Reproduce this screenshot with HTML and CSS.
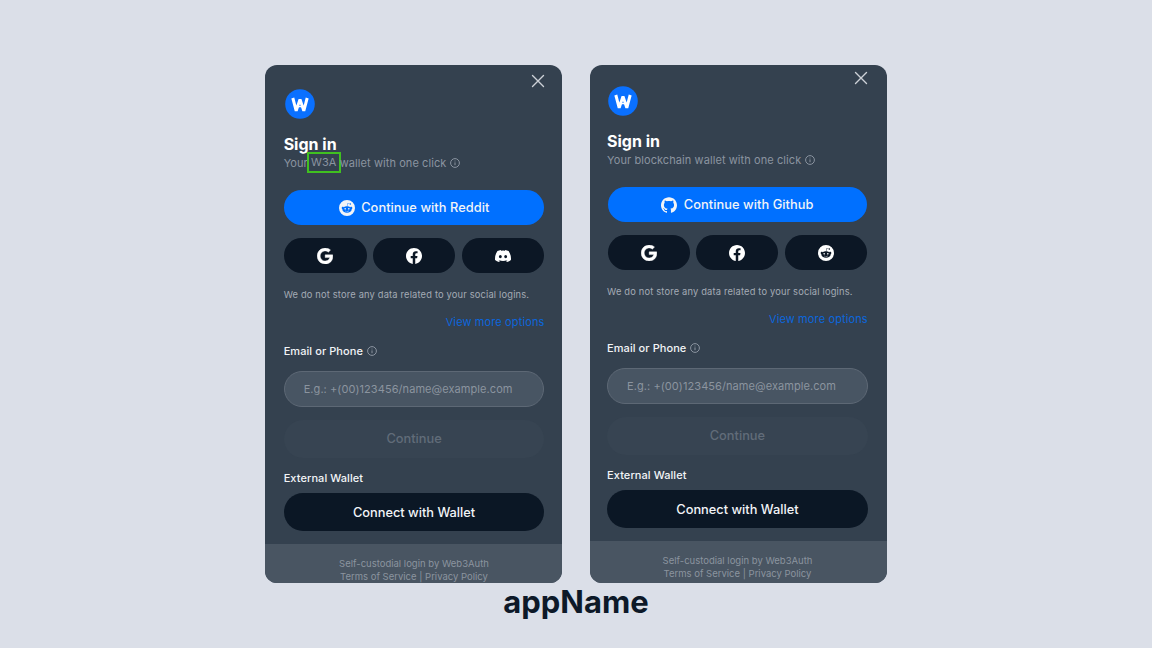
FILE: index.html
```html
<!DOCTYPE html>
<html lang="en">
<head>
<meta charset="utf-8">
<title>Sign in</title>
<link rel="stylesheet" href="styles.css">
</head>
<body>
<svg class="sprite" aria-hidden="true">
  <symbol id="close" viewBox="0 0 14 14"><path d="M1.5 1.5 12.5 12.5M12.5 1.5 1.5 12.5" fill="none" stroke="currentColor" stroke-width="1.4" stroke-linecap="round"/></symbol>
  <symbol id="info" viewBox="0 0 12 12"><circle cx="6" cy="6" r="4.4" fill="none" stroke="currentColor" stroke-width="1"/><path d="M6 5.4V8.2M6 3.6V4.4" stroke="currentColor" stroke-width="1" fill="none"/></symbol>
  <symbol id="logo" viewBox="0 0 30 30"><circle cx="15" cy="15" r="14.8" fill="#0a70ff"/><path d="M7.8 9 11.2 21.8 15 10.4 18.8 21.8 22.2 9" fill="none" stroke="#fff" stroke-width="3" stroke-linejoin="bevel"/><path d="M13.4 17.6h3.2" stroke="#fff" stroke-width="1.2"/></symbol>
  <symbol id="google" viewBox="0 0 24 24"><path d="M12.24 10.285V14.4h6.806c-.275 1.765-2.056 5.174-6.806 5.174-4.095 0-7.439-3.389-7.439-7.574s3.345-7.574 7.439-7.574c2.33 0 3.891.989 4.785 1.849l3.254-3.138C18.189 1.186 15.479 0 12.24 0c-6.635 0-12 5.365-12 12s5.365 12 12 12c6.926 0 11.52-4.869 11.52-11.726 0-.788-.085-1.39-.189-1.989H12.24z" fill="currentColor" stroke="currentColor" stroke-width=".6"/></symbol>
  <symbol id="facebook" viewBox="0 0 24 24"><path d="M24 12.073c0-6.627-5.373-12-12-12s-12 5.373-12 12c0 5.99 4.388 10.954 10.125 11.854v-8.385H7.078v-3.47h3.047V9.43c0-3.007 1.792-4.669 4.533-4.669 1.312 0 2.686.235 2.686.235v2.953H15.83c-1.491 0-1.956.925-1.956 1.874v2.25h3.328l-.532 3.47h-2.796v8.385C19.612 23.027 24 18.062 24 12.073z" fill="currentColor"/></symbol>
  <symbol id="discord" viewBox="0 0 24 24"><path d="M20.317 4.37a19.79 19.79 0 0 0-4.885-1.515c-.21.375-.444.864-.608 1.25a18.27 18.27 0 0 0-5.487 0 12.64 12.64 0 0 0-.617-1.25A19.74 19.74 0 0 0 3.677 4.37C.533 9.046-.319 13.58.099 18.057a19.9 19.9 0 0 0 5.993 3.03c.462-.63.874-1.295 1.226-1.994a13.1 13.1 0 0 1-1.872-.892l.372-.292a14.2 14.2 0 0 0 12.364 0l.373.292c-.598.35-1.22.645-1.873.892.36.698.772 1.362 1.225 1.993a19.84 19.84 0 0 0 6.002-3.03c.5-5.177-.838-9.674-3.549-13.66zM8.02 15.33c-1.183 0-2.157-1.085-2.157-2.419s.956-2.419 2.157-2.419c1.21 0 2.176 1.096 2.157 2.42 0 1.333-.956 2.418-2.157 2.418zm7.975 0c-1.183 0-2.157-1.085-2.157-2.419s.955-2.419 2.157-2.419c1.21 0 2.176 1.096 2.157 2.42 0 1.333-.946 2.418-2.157 2.418z" fill="currentColor"/></symbol>
  <symbol id="github" viewBox="0 0 24 24"><path d="M12 .297c-6.63 0-12 5.373-12 12 0 5.303 3.438 9.8 8.205 11.385.6.113.82-.258.82-.577 0-.285-.01-1.04-.015-2.04-3.338.724-4.042-1.61-4.042-1.61C4.422 18.07 3.633 17.7 3.633 17.7c-1.087-.744.084-.729.084-.729 1.205.084 1.838 1.236 1.838 1.236 1.07 1.835 2.809 1.305 3.495.998.108-.776.417-1.305.76-1.605-2.665-.3-5.466-1.332-5.466-5.93 0-1.31.465-2.38 1.235-3.22-.135-.303-.54-1.523.105-3.176 0 0 1.005-.322 3.3 1.23.96-.267 1.98-.399 3-.405 1.02.006 2.04.138 3 .405 2.28-1.552 3.285-1.23 3.285-1.23.645 1.653.24 2.873.12 3.176.765.84 1.23 1.91 1.23 3.22 0 4.61-2.805 5.625-5.475 5.92.42.36.81 1.096.81 2.22 0 1.606-.015 2.896-.015 3.286 0 .315.21.69.825.57C20.565 22.092 24 17.592 24 12.297c0-6.627-5.373-12-12-12" fill="currentColor"/></symbol>
  <symbol id="reddit" viewBox="0 0 24 24"><path fill-rule="evenodd" d="M12 0A12 12 0 0 0 0 12a12 12 0 0 0 12 12 12 12 0 0 0 12-12A12 12 0 0 0 12 0zm5.01 4.744c.688 0 1.25.561 1.25 1.249a1.25 1.25 0 0 1-2.498.056l-2.597-.547-.8 3.747c1.824.07 3.48.632 4.674 1.488.308-.309.73-.491 1.207-.491.968 0 1.754.786 1.754 1.754 0 .716-.435 1.333-1.01 1.614a3.111 3.111 0 0 1 .042.52c0 2.694-3.13 4.87-7.004 4.87-3.874 0-7.004-2.176-7.004-4.87 0-.183.015-.366.043-.534A1.748 1.748 0 0 1 4.028 12c0-.968.786-1.754 1.754-1.754.463 0 .898.196 1.207.49 1.207-.883 2.878-1.43 4.744-1.487l.885-4.182a.342.342 0 0 1 .14-.197.35.35 0 0 1 .238-.042l2.906.617a1.214 1.214 0 0 1 1.108-.701zM9.25 12C8.561 12 8 12.562 8 13.25c0 .687.561 1.248 1.25 1.248.687 0 1.248-.561 1.248-1.249 0-.688-.561-1.249-1.249-1.249zm5.5 0c-.687 0-1.248.561-1.248 1.25 0 .687.561 1.248 1.249 1.248.688 0 1.249-.561 1.249-1.249 0-.687-.562-1.249-1.25-1.249zm-5.466 3.99a.327.327 0 0 0-.231.094.33.33 0 0 0 0 .463c.842.842 2.484.913 2.961.913.477 0 2.105-.056 2.961-.913a.361.361 0 0 0 .029-.463.33.33 0 0 0-.464 0c-.547.533-1.684.73-2.512.73-.828 0-1.979-.196-2.512-.73a.326.326 0 0 0-.232-.095z" fill="currentColor"/></symbol>
</svg>
<main class="stage">
  <section class="card">
    <svg class="close"><use href="#close"/></svg>
    <div class="body">
      <svg class="logo"><use href="#logo"/></svg>
      <h1 class="title">Sign in</h1>
      <p class="subtitle">Your <span class="marked">W3A</span> wallet with one click<svg class="info"><use href="#info"/></svg></p>
      <div class="button primary"><svg class="icon"><use href="#reddit"/></svg><span>Continue with Reddit</span></div>
      <div class="socials">
        <div class="button social"><svg class="icon"><use href="#google"/></svg></div>
        <div class="button social"><svg class="icon"><use href="#facebook"/></svg></div>
        <div class="button social"><svg class="icon"><use href="#discord"/></svg></div>
      </div>
      <p class="note">We do not store any data related to your social logins.</p>
      <div class="more"><span>View more options</span></div>
      <div class="label"><span>Email or Phone</span><svg class="info"><use href="#info"/></svg></div>
      <div class="field"><span>E.g.: +(00)123456/name@example.com</span></div>
      <div class="button continue"><span>Continue</span></div>
      <div class="label wallet-label"><span>External Wallet</span></div>
      <div class="button wallet"><span>Connect with Wallet</span></div>
    </div>
    <footer class="footer"><span>Self-custodial login by Web3Auth</span><span>Terms of Service | Privacy Policy</span></footer>
  </section>
  <section class="card raised">
    <svg class="close"><use href="#close"/></svg>
    <div class="body">
      <svg class="logo"><use href="#logo"/></svg>
      <h1 class="title">Sign in</h1>
      <p class="subtitle">Your blockchain wallet with one click<svg class="info"><use href="#info"/></svg></p>
      <div class="button primary"><svg class="icon"><use href="#github"/></svg><span>Continue with Github</span></div>
      <div class="socials">
        <div class="button social"><svg class="icon"><use href="#google"/></svg></div>
        <div class="button social"><svg class="icon"><use href="#facebook"/></svg></div>
        <div class="button social"><svg class="icon"><use href="#reddit"/></svg></div>
      </div>
      <p class="note">We do not store any data related to your social logins.</p>
      <div class="more"><span>View more options</span></div>
      <div class="label"><span>Email or Phone</span><svg class="info"><use href="#info"/></svg></div>
      <div class="field"><span>E.g.: +(00)123456/name@example.com</span></div>
      <div class="button continue"><span>Continue</span></div>
      <div class="label wallet-label"><span>External Wallet</span></div>
      <div class="button wallet"><span>Connect with Wallet</span></div>
    </div>
    <footer class="footer"><span>Self-custodial login by Web3Auth</span><span>Terms of Service | Privacy Policy</span></footer>
  </section>
</main>
<div class="caption">appName</div>
</body>
</html>
```
FILE: styles.css
```css
* { box-sizing: border-box; }
body {
  margin: 0;
  width: 1152px;
  height: 648px;
  overflow: hidden;
  background: #dbdfe8;
  font-family: Inter, "Liberation Sans", sans-serif;
  color: #f2f4f7;
}
.sprite { display: none; }
svg { display: block; flex: none; }
.stage {
  display: flex;
  justify-content: center;
  gap: 28.5px;
  padding-top: 65px;
}
.card {
  position: relative;
  display: flex;
  flex-direction: column;
  width: 296.5px;
  height: 518px;
  border-radius: 12px;
  background: #34414f;
  overflow: hidden;
}
.body {
  display: flex;
  flex-direction: column;
  height: 479px;
  flex: none;
  padding: 23.5px 17.3px 0 18.4px;
}
.raised .body { height: 476px; padding: 20.5px 19px 0 16.8px; }
.close {
  position: absolute;
  top: 9px;
  right: 17px;
  width: 14px;
  height: 14px;
  color: #cdd1d7;
}
.raised .close { top: 6px; right: 18.6px; }
.logo { width: 30px; height: 30px; margin-left: 1.3px; }
.title {
  margin: 15px 0 0;
  height: 20px;
  font-size: 16px;
  line-height: 20px;
  font-weight: 700;
  color: #fff;
}
.subtitle {
  display: flex;
  align-items: center;
  white-space: pre;
  margin: .5px 0 0;
  height: 17px;
  font-size: 11px;
  letter-spacing: .08px;
  color: #8b94a0;
}
.info { width: 12px; height: 12px; margin-left: 2.8px; color: #8b94a0; }
.marked {
  height: 21px;
  margin: 0 -4.4px 0 -4px;
  padding: 0 2.5px 0 2px;
  border: 2px solid #40c020;
  line-height: 17px;
}
.button {
  display: flex;
  align-items: center;
  justify-content: center;
  border-radius: 20px;
  font-size: 12.8px;
  font-weight: 500;
  flex: none;
}
.icon { width: 16px; height: 16px; }
.primary {
  height: 35px;
  margin: 19.2px .8px 0;
  gap: 6.5px;
  background: #0070ff;
  letter-spacing: .06px;
}
.socials {
  display: grid;
  grid-template-columns: repeat(3, 1fr);
  gap: 6.5px;
  margin: 13px .8px 0;
}
.social { height: 35px; background: #0c1725; color: #fff; }
.note {
  margin: 14px 0 0;
  height: 15px;
  font-size: 9.3px;
  line-height: 15px;
  letter-spacing: .18px;
  white-space: nowrap;
  color: #a4abb5;
}
.more {
  display: flex;
  justify-content: flex-end;
  margin-top: 12.8px;
  height: 15px;
  font-size: 11px;
  line-height: 15px;
  letter-spacing: .12px;
  color: #0c66dc;
}
.label {
  display: flex;
  align-items: center;
  margin-top: 13.2px;
  height: 15px;
  font-size: 11px;
  font-weight: 500;
  letter-spacing: .07px;
}
.field {
  display: flex;
  align-items: center;
  height: 36px;
  flex: none;
  margin-top: 12.8px;
  padding-left: 19px;
  border: 1px solid #5d6875;
  border-radius: 18px;
  background: #485563;
  font-size: 11px;
  letter-spacing: .07px;
  color: #8b949f;
}
.continue {
  height: 38px;
  margin: 13px 0 0;
  background: #374452;
  color: #616c79;
}
.wallet-label { margin-top: 13px; }
.wallet { height: 38px; margin-top: 7px; padding-top: 1px; background: #0b1725; }
.footer {
  display: flex;
  flex-direction: column;
  align-items: center;
  flex: 1;
  padding: 13px 0 0 1px;
  background: #495562;
  font-size: 9.5px;
  line-height: 13px;
  color: #8b949f;
}
.raised .footer { padding-right: 3px; }
.caption {
  text-align: center;
  font-size: 31px;
  line-height: 38px;
  font-weight: 700;
  color: #0d1928;
}
```
